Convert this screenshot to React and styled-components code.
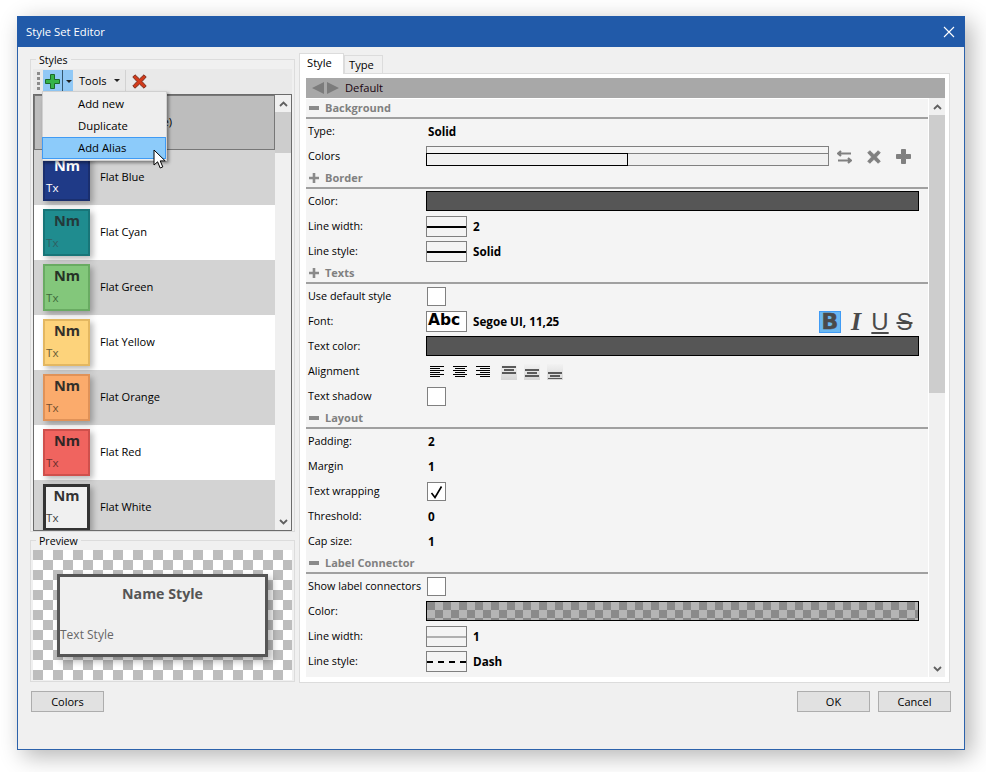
import React from "react";
import styled, { createGlobalStyle } from "styled-components";

const Global = createGlobalStyle`
  * { box-sizing: border-box; }
  html, body { margin: 0; padding: 0; background: #fff; }
  body { font-family: "Open Sans", "Noto Sans", sans-serif; font-size: 11.2px; color: #000; }
`;

const Page = styled.div`
  width: 986px;
  height: 772px;
  padding: 16px 0 0 17px;
  overflow: hidden;
`;
const Window = styled.div`
  width: 948px;
  height: 734px;
  background: #f0f0f0;
  border: 1px solid #2c62ab;
  border-top: 0;
  box-shadow: 6px 6px 22px rgba(0, 0, 0, 0.3);
`;
const TitleBar = styled.div`
  height: 31px;
  margin: 0 -1px;
  background: #215aa9;
  color: #fff;
  font-size: 11.3px;
  display: flex;
  align-items: center;
  justify-content: space-between;
  padding: 0 10px 0 9px;
`;
const Body = styled.div`
  padding: 6px 13px 0 12px;
`;
const Main = styled.div`
  display: flex;
  gap: 4px;
  height: 630px;
`;
const LeftCol = styled.div`
  width: 265px;
  padding-top: 6px;
  display: flex;
  flex-direction: column;
  gap: 8px;
`;
const Group = styled.div`
  position: relative;
  border: 1px solid #dcdcdc;
  padding: 9px 2px ${(p) => p.$pb || 0}px;
`;
const GroupLabel = styled.span`
  position: absolute;
  left: 5px;
  top: -6px;
  line-height: 12px;
  padding: 0 3px;
  font-size: 10.6px;
  background: #f0f0f0;
`;
const Toolbar = styled.div`
  position: relative;
  height: 25px;
  background: #e9e9e9;
  display: flex;
  align-items: flex-start;
  padding: 1px 0 0 4px;
`;
const Grip = styled.div`
  width: 3px;
  height: 20px;
  margin: 2px 3px 0 0;
  background: repeating-linear-gradient(to bottom, #8c8c8c 0 3px, transparent 3px 5px);
`;
const SplitButton = styled.div`
  width: 30px;
  height: 22px;
  background: #90c8f6;
  display: flex;
  align-items: center;
  padding-left: 2px;
`;
const SplitDivider = styled.div`
  width: 1px;
  height: 22px;
  background: #34566e;
  margin: 0 3px 0 2px;
`;
const Caret = styled.i`
  width: 0;
  height: 0;
  border-left: 3px solid transparent;
  border-right: 3px solid transparent;
  border-top: 3px solid #222;
`;
const ToolsButton = styled.div`
  display: flex;
  align-items: center;
  gap: 7px;
  height: 22px;
  margin-left: 6px;
  font-size: 11.1px;
  padding-bottom: 1px;
`;
const ToolSep = styled.div`
  width: 1px;
  height: 23px;
  background: #d2d2d2;
  margin: 0 6px 0 5px;
`;
const DeleteButton = styled.div`
  height: 22px;
  display: flex;
  align-items: center;
`;
const Menu = styled.div`
  position: absolute;
  left: 9px;
  top: 22px;
  width: 125px;
  height: 70px;
  z-index: 5;
  background: #eeeeee;
  border: 1px solid #d0d0d0;
  box-shadow: 2px 2px 3px rgba(0, 0, 0, 0.4);
  padding-top: 1px;
`;
const MenuItem = styled.div`
  height: 22px;
  width: 124px;
  margin-left: -1px;
  display: flex;
  align-items: center;
  padding: 0 0 2px 35px;
  font-size: 11.3px;
  background: ${(p) => (p.$active ? "#8ccbfa" : "transparent")};
  border: 1px solid ${(p) => (p.$active ? "#3f9bf5" : "transparent")};
`;
const Cursor = styled.svg`
  position: absolute;
  left: 120px;
  top: 80px;
  z-index: 6;
`;
const ListBox = styled.div`
  height: 437px;
  border: 1px solid #6b6b6b;
  display: flex;
  overflow: hidden;
  background: #fff;
`;
const List = styled.div`
  width: 241px;
  flex: none;
`;
const ListRow = styled.div`
  height: 55px;
  display: flex;
  align-items: center;
  gap: 10px;
  padding-left: 9px;
  background: ${(p) => (p.$selected ? "#bdbdbd" : p.$alt ? "#d3d3d3" : "#fff")};
  ${(p) => (p.$selected ? "border: 1px solid #777; padding-left: 8px;" : "")}
`;
const RowName = styled.span`
  font-size: 11.1px;
  padding-bottom: 2px;
`;
const Swatch = styled.div`
  width: 47px;
  height: 47px;
  flex: none;
  background: ${(p) => p.$bg};
  border: ${(p) => (p.$thick ? 3 : 2)}px solid ${(p) => p.$edge};
  color: ${(p) => p.$fg};
  box-shadow: 3px 3px 6px rgba(0, 0, 0, 0.28);
  display: flex;
  flex-direction: column;
  padding: 0 0 0 ${(p) => (p.$thick ? 0 : 1)}px;
`;
const SwatchName = styled.div`
  font-size: 14.5px;
  font-weight: 700;
  line-height: 20px;
  text-align: center;
  margin-top: ${(p) => (p.$thick ? -1 : 0)}px;
`;
const SwatchText = styled.div`
  font-size: 11.6px;
  line-height: 16px;
  margin-top: 4px;
  color: ${(p) => p.$fg};
`;
const Scrollbar = styled.div`
  width: ${(p) => p.$w}px;
  flex: none;
  background: #f0f0f0;
  display: flex;
  flex-direction: column;
  align-items: stretch;
`;
const ScrollEnd = styled.div`
  height: 17px;
  flex: none;
  display: flex;
  align-items: center;
  justify-content: center;
`;
const ScrollThumb = styled.div`
  height: ${(p) => p.$h}px;
  flex: none;
  background: #cdcdcd;
`;
const ScrollRest = styled.div`
  flex: 1;
`;
const Checker = styled.div`
  height: 130px;
  padding: 24px 0 0 24px;
  background: repeating-conic-gradient(#fff 0 25%, #bdbdbd 0 50%) 0 0 / 20px 20px;
`;
const PreviewBox = styled.div`
  width: 211px;
  height: 83px;
  background: #f0f0f0;
  border: 3px solid #555;
  box-shadow: 4px 4px 7px rgba(0, 0, 0, 0.3);
  display: flex;
  flex-direction: column;
`;
const PreviewName = styled.div`
  font-size: 14.2px;
  font-weight: 700;
  color: #555;
  text-align: center;
  line-height: 20px;
  margin-top: 7px;
`;
const PreviewText = styled.div`
  font-size: 12px;
  color: #666;
  line-height: 16px;
  margin: 23px 0 0 0;
`;
const RightCol = styled.div`
  width: 652px;
  margin-right: -1px;
  display: flex;
  flex-direction: column;
  padding-right: 1px;
`;
const Tabs = styled.div`
  height: 20px;
  display: flex;
  align-items: flex-end;
  flex: none;
`;
const Tab = styled.div`
  border: 1px solid #dcdcdc;
  border-bottom: 0;
  background: ${(p) => (p.$on ? "#fff" : "#f0f0f0")};
  width: ${(p) => p.$w}px;
  height: ${(p) => (p.$on ? 21 : 18)}px;
  margin-bottom: ${(p) => (p.$on ? -1 : 0)}px;
  position: relative;
  z-index: ${(p) => (p.$on ? 1 : 0)};
  padding: ${(p) => (p.$on ? "2px 0 0 7px" : "2px 0 0 4px")};
  line-height: 14px;
`;
const TabPanel = styled.div`
  height: 610px;
  flex: none;
  background: #fff;
  border: 1px solid #dcdcdc;
  padding: 4px 4px 5px 6px;
  display: flex;
  flex-direction: column;
`;
const HeaderBar = styled.div`
  height: 20px;
  flex: none;
  background: #a8a8a8;
  display: flex;
  align-items: center;
  gap: 6px;
  padding-left: 6px;
  color: #1a0510;
`;
const HeaderTitle = styled.span`
  padding-bottom: 2px;
`;
const GridWrap = styled.div`
  flex: 1;
  display: flex;
  gap: 1px;
  min-height: 0;
`;
const PropGrid = styled.div`
  width: 622px;
  flex: none;
  background: #f4f4f4;
  border-top: 1px solid #fff;
`;
const SectionHead = styled.div`
  height: 20px;
  border-bottom: 2px solid #a0a0a0;
  display: flex;
  align-items: center;
  gap: 6px;
  padding-left: 3px;
  color: #808080;
  font-weight: 700;
  font-size: 11px;
`;
const SectionTitle = styled.span`
  padding-bottom: 2px;
`;
const Row = styled.div`
  height: 25px;
  display: flex;
  align-items: center;
  padding-right: 9px;
`;
const Label = styled.div`
  width: 120px;
  flex: none;
  padding: 0 0 2px 2px;
  font-size: 10.8px;
  white-space: nowrap;
`;
const Value = styled.div`
  flex: 1;
  min-width: 0;
  display: flex;
  align-items: center;
  gap: 6px;
`;
const Bold = styled.span`
  font-weight: 700;
  font-size: 11.7px;
  padding: 0 0 2px ${(p) => p.$pad || 0}px;
  white-space: nowrap;
`;
const ColorBar = styled.div`
  flex: 1;
  height: 20px;
  margin-bottom: 1px;
  border: 1px solid #000;
  background: #565656;
`;
const CheckerBar = styled(ColorBar)`
  background: repeating-conic-gradient(#b5b5b5 0 25%, #8a8a8a 0 50%) 0 0 / 16px 16px;
`;
const GradientBox = styled.div`
  width: 403px;
  height: 20px;
  margin-bottom: 1px;
  display: flex;
  flex-direction: column;
  flex: none;
`;
const GradientTop = styled.div`
  height: 7px;
  border: 1px solid #808080;
  border-bottom: 0;
`;
const GradientBottom = styled.div`
  height: 13px;
  display: flex;
`;
const GradientStop = styled.div`
  background: #f0f0f0;
  width: ${(p) => p.$w}px;
  flex: ${(p) => (p.$w ? "none" : 1)};
  border: 1px solid ${(p) => (p.$w ? "#000" : "#808080")};
  ${(p) => (p.$w ? "" : "border-left: 0;")}
`;
const GradientIcons = styled.div`
  display: flex;
  align-items: center;
  gap: 15px;
  margin-left: 2px;
`;
const LineBox = styled.div`
  width: 41px;
  height: 21px;
  flex: none;
  border: 1px solid #808080;
  display: flex;
  align-items: center;
`;
const LineMark = styled.div`
  width: 100%;
  height: 0;
  border-top: 2px ${(p) => p.$kind || "solid"} ${(p) => p.$color || "#000"};
`;
const FontBox = styled(LineBox)`
  background: #fff;
  align-items: flex-start;
  padding-left: 1px;
  font-family: "DejaVu Sans", sans-serif;
  font-weight: 700;
  font-size: 15.5px;
  line-height: 17px;
  color: #000;
`;
const Check = styled.div`
  width: 19px;
  height: 19px;
  margin-left: 1px;
  flex: none;
  background: #fff;
  border: 1px solid #808080;
  display: flex;
  align-items: center;
  justify-content: center;
`;
const FontStyles = styled.div`
  margin-left: auto;
  margin-right: -1px;
  display: flex;
  align-items: center;
`;
const FontStyleBtn = styled.div`
  width: ${(p) => p.$w}px;
  height: 22px;
  flex: none;
  display: flex;
  align-items: center;
  justify-content: center;
  color: #4a4a4a;
  line-height: 22px;
  background: ${(p) => (p.$on ? "#6ab7f0" : "transparent")};
  border: 1px solid ${(p) => (p.$on ? "#3f9bf5" : "transparent")};
  font-family: ${(p) => p.$font};
  font-size: ${(p) => p.$size}px;
  font-weight: ${(p) => p.$weight || 400};
  font-style: ${(p) => p.$italic || "normal"};
  text-decoration: ${(p) => p.$deco || "none"};
  text-decoration-thickness: 2px;
  text-underline-offset: 2px;
  -webkit-text-stroke: ${(p) => p.$stroke || 0}px #4a4a4a;
`;
const AlignGroup = styled.div`
  display: flex;
  align-items: center;
  gap: 7px;
  margin-left: ${(p) => p.$ml || 0}px;
`;
const AlignBtn = styled.div`
  width: 16px;
  height: 16px;
  flex: none;
  display: flex;
  align-items: center;
  justify-content: center;
  ${(p) => (p.$shade ? "background: linear-gradient(#f2f2f2, #d6d6d6);" : "")}
`;
const Footer = styled.div`
  display: flex;
  justify-content: space-between;
  padding-left: 1px;
  margin-top: 8px;
`;
const FooterRight = styled.div`
  display: flex;
  gap: 8px;
`;
const Btn = styled.div`
  width: 73px;
  height: 21px;
  background: #e1e1e1;
  border: 1px solid #adadad;
  display: flex;
  align-items: center;
  justify-content: center;
  font-size: 11px;
`;

const Chevron = ({ up }) => (
  <svg width="9" height="6" viewBox="0 0 9 6">
    <path d={up ? "M1 5 L4.5 1.5 L8 5" : "M1 1 L4.5 4.5 L8 1"} fill="none" stroke="#606060" strokeWidth="1.8" />
  </svg>
);

const Plus = ({ size = 15, fill, stroke }) => (
  <svg width={size} height={size} viewBox="0 0 15 15">
    <path d="M5.5 .5h4v5h5v4h-5v5h-4v-5h-5v-4h5z" fill={fill} stroke={stroke} strokeWidth="1" />
  </svg>
);

const Cross = ({ size = 15, fill, stroke }) => (
  <svg width={size} height={size} viewBox="0 0 15 15">
    <path d="M3 .8L7.5 5 12 .8 14.2 3 10 7.5l4.2 4.5L12 14.2 7.5 10 3 14.2.8 12 5 7.5.8 3z" fill={fill} stroke={stroke} strokeWidth="1" />
  </svg>
);

const Swap = () => (
  <svg width="15" height="14" viewBox="0 0 15 14">
    <path d="M1 3.5h13M4 1L1 3.5 4 6M1 10.5h13M11 8l3 2.5L11 13" fill="none" stroke="#808080" strokeWidth="2.2" />
  </svg>
);

const Minus = () => (
  <svg width="10" height="10" viewBox="0 0 10 10">
    <rect x="0" y="3" width="10" height="4" fill="#8a8a8a" />
  </svg>
);
const SectionPlus = () => (
  <svg width="10" height="10" viewBox="0 0 10 10">
    <path d="M3.7 0h2.6v3.7H10v2.6H6.3V10H3.7V6.3H0V3.7h3.7z" fill="#8a8a8a" />
  </svg>
);

const HAlign = ({ kind }) => {
  const rows = [0, 2, 4, 6, 8, 10];
  return (
    <svg width="15" height="12" viewBox="0 0 15 12">
      {rows.map((y, i) => {
        const w = i % 2 ? 10 : 14;
        const x = kind === "l" ? 0 : kind === "c" ? (14 - w) / 2 : 14 - w;
        return <rect key={y} x={x} y={y} width={w} height="1" fill="#000" />;
      })}
    </svg>
  );
};

const VAlign = ({ top }) => (
  <svg width="14" height="14" viewBox="0 0 14 14">
    {[0, 3, 6].map((d, i) => (
      <rect key={d} x={i === 1 ? 2 : 0} y={top + d} width={i === 1 ? 10 : 14} height="2" fill="#5a5a5a" />
    ))}
  </svg>
);

const styles = [
  { name: "Default (Base)", bg: "#f0f0f0", edge: "#555", fg: "#333", tx: "#555", selected: true },
  { name: "Flat Blue", bg: "#1f3a87", edge: "#1a2f6f", fg: "#fff", tx: "#fff", alt: true },
  { name: "Flat Cyan", bg: "#1f8c8f", edge: "#187578", fg: "#24393a", tx: "#2f6062" },
  { name: "Flat Green", bg: "#83c77b", edge: "#69ab62", fg: "#263326", tx: "#3f6a3b", alt: true },
  { name: "Flat Yellow", bg: "#fdd37b", edge: "#e3b761", fg: "#33302a", tx: "#6a5c38" },
  { name: "Flat Orange", bg: "#fbab6c", edge: "#e09258", fg: "#33302a", tx: "#74502f", alt: true },
  { name: "Flat Red", bg: "#f0645f", edge: "#cf504c", fg: "#302626", tx: "#6e2f2d" },
  { name: "Flat White", bg: "#f0f0f0", edge: "#333", fg: "#333", tx: "#444", alt: true, thick: true },
];

const Section = ({ title, open, children }) => (
  <>
    <SectionHead>
      {open ? <Minus /> : <SectionPlus />}
      <SectionTitle>{title}</SectionTitle>
    </SectionHead>
    {children}
  </>
);

const Prop = ({ label, children }) => (
  <Row>
    <Label>{label}</Label>
    <Value>{children}</Value>
  </Row>
);

export default function App() {
  return (
    <Page>
      <Global />
      <Window>
        <TitleBar>
          <span>Style Set Editor</span>
          <svg width="12" height="12" viewBox="0 0 12 12">
            <path d="M1 1l10 10M11 1L1 11" stroke="#fff" strokeWidth="1.1" />
          </svg>
        </TitleBar>
        <Body>
          <Main>
            <LeftCol>
              <Group>
                <GroupLabel>Styles</GroupLabel>
                <Toolbar>
                  <Grip />
                  <SplitButton>
                    <Plus fill="#35b44a" stroke="#1c6a2a" />
                    <SplitDivider />
                    <Caret />
                  </SplitButton>
                  <ToolsButton>
                    <span>Tools</span>
                    <Caret />
                  </ToolsButton>
                  <ToolSep />
                  <DeleteButton>
                    <Cross fill="#d33a1a" stroke="#7a3020" />
                  </DeleteButton>
                  <Menu>
                    <MenuItem>Add new</MenuItem>
                    <MenuItem>Duplicate</MenuItem>
                    <MenuItem $active>Add Alias</MenuItem>
                  </Menu>
                  <Cursor width="14" height="21" viewBox="0 0 14 21">
                    <path d="M1 1v15l3.6-3.2 2.6 6.2 2.6-1.1-2.6-6h5z" fill="#fff" stroke="#000" strokeWidth="1" />
                  </Cursor>
                </Toolbar>
                <ListBox>
                  <List>
                    {styles.map((s) => (
                      <ListRow key={s.name} $alt={s.alt} $selected={s.selected}>
                        <Swatch $bg={s.bg} $edge={s.edge} $fg={s.fg} $thick={s.thick}>
                          <SwatchName $thick={s.thick}>Nm</SwatchName>
                          <SwatchText $fg={s.tx}>Tx</SwatchText>
                        </Swatch>
                        <RowName>{s.name}</RowName>
                      </ListRow>
                    ))}
                  </List>
                  <Scrollbar $w={16}>
                    <ScrollEnd><Chevron up /></ScrollEnd>
                    <ScrollThumb $h={41} />
                    <ScrollRest />
                    <ScrollEnd><Chevron /></ScrollEnd>
                  </Scrollbar>
                </ListBox>
              </Group>
              <Group $pb={1}>
                <GroupLabel>Preview</GroupLabel>
                <Checker>
                  <PreviewBox>
                    <PreviewName>Name Style</PreviewName>
                    <PreviewText>Text Style</PreviewText>
                  </PreviewBox>
                </Checker>
              </Group>
            </LeftCol>
            <RightCol>
              <Tabs>
                <Tab $on $w={45}>Style</Tab>
                <Tab $w={39}>Type</Tab>
              </Tabs>
              <TabPanel>
                <HeaderBar>
                  <svg width="27" height="12" viewBox="0 0 27 12">
                    <path d="M12 0v12L0 6zM15 0v12l12-6z" fill="#7c7c7c" />
                  </svg>
                  <HeaderTitle>Default</HeaderTitle>
                </HeaderBar>
                <GridWrap>
                  <PropGrid>
                    <Section title="Background" open>
                      <Prop label="Type:"><Bold $pad={2}>Solid</Bold></Prop>
                      <Prop label="Colors">
                        <GradientBox>
                          <GradientTop />
                          <GradientBottom>
                            <GradientStop $w={202} />
                            <GradientStop />
                          </GradientBottom>
                        </GradientBox>
                        <GradientIcons>
                          <Swap />
                          <Cross fill="#808080" stroke="#808080" size={14} />
                          <Plus fill="#808080" stroke="#808080" size={15} />
                        </GradientIcons>
                      </Prop>
                    </Section>
                    <Section title="Border">
                      <Prop label="Color:"><ColorBar /></Prop>
                      <Prop label="Line width:"><LineBox><LineMark /></LineBox><Bold>2</Bold></Prop>
                      <Prop label="Line style:"><LineBox><LineMark /></LineBox><Bold>Solid</Bold></Prop>
                    </Section>
                    <Section title="Texts">
                      <Prop label="Use default style"><Check /></Prop>
                      <Prop label="Font:">
                        <FontBox>Abc</FontBox>
                        <Bold>Segoe UI, 11,25</Bold>
                        <FontStyles>
                          <FontStyleBtn $on $w={22} $font='"DejaVu Sans", sans-serif' $size={22} $weight={700} $stroke={0.5}>B</FontStyleBtn>
                          <FontStyleBtn $w={30} $font='"Liberation Serif", serif' $size={26} $weight={700} $italic="italic">I</FontStyleBtn>
                          <FontStyleBtn $w={18} $font='"Liberation Sans", sans-serif' $size={24} $deco="underline">U</FontStyleBtn>
                          <FontStyleBtn $w={31} $font='"Liberation Sans", sans-serif' $size={24} $deco="line-through">S</FontStyleBtn>
                        </FontStyles>
                      </Prop>
                      <Prop label="Text color:"><ColorBar /></Prop>
                      <Prop label="Alignment">
                        <AlignGroup $ml={3}>
                          <AlignBtn><HAlign kind="l" /></AlignBtn>
                          <AlignBtn><HAlign kind="c" /></AlignBtn>
                          <AlignBtn><HAlign kind="r" /></AlignBtn>
                        </AlignGroup>
                        <AlignGroup $ml={4}>
                          <AlignBtn $shade><VAlign top={1} /></AlignBtn>
                          <AlignBtn $shade><VAlign top={4} /></AlignBtn>
                          <AlignBtn $shade><VAlign top={7} /></AlignBtn>
                        </AlignGroup>
                      </Prop>
                      <Prop label="Text shadow"><Check /></Prop>
                    </Section>
                    <Section title="Layout" open>
                      <Prop label="Padding:"><Bold $pad={2}>2</Bold></Prop>
                      <Prop label="Margin"><Bold $pad={2}>1</Bold></Prop>
                      <Prop label="Text wrapping">
                        <Check>
                          <svg width="13" height="14" viewBox="0 0 13 14">
                            <path d="M1.5 8l3.5 4.5L11.5 1.5" fill="none" stroke="#000" strokeWidth="1.6" />
                          </svg>
                        </Check>
                      </Prop>
                      <Prop label="Threshold:"><Bold $pad={2}>0</Bold></Prop>
                      <Prop label="Cap size:"><Bold $pad={2}>1</Bold></Prop>
                    </Section>
                    <Section title="Label Connector" open>
                      <Prop label="Show label connectors"><Check /></Prop>
                      <Prop label="Color:"><CheckerBar /></Prop>
                      <Prop label="Line width:"><LineBox><LineMark $color="#b0b0b0" /></LineBox><Bold>1</Bold></Prop>
                      <Prop label="Line style:"><LineBox><LineMark $kind="dashed" /></LineBox><Bold>Dash</Bold></Prop>
                    </Section>
                  </PropGrid>
                  <Scrollbar $w={16}>
                    <ScrollEnd><Chevron up /></ScrollEnd>
                    <ScrollThumb $h={278} />
                    <ScrollRest />
                    <ScrollEnd><Chevron /></ScrollEnd>
                  </Scrollbar>
                </GridWrap>
              </TabPanel>
            </RightCol>
          </Main>
          <Footer>
            <Btn>Colors</Btn>
            <FooterRight>
              <Btn>OK</Btn>
              <Btn>Cancel</Btn>
            </FooterRight>
          </Footer>
        </Body>
      </Window>
    </Page>
  );
}
